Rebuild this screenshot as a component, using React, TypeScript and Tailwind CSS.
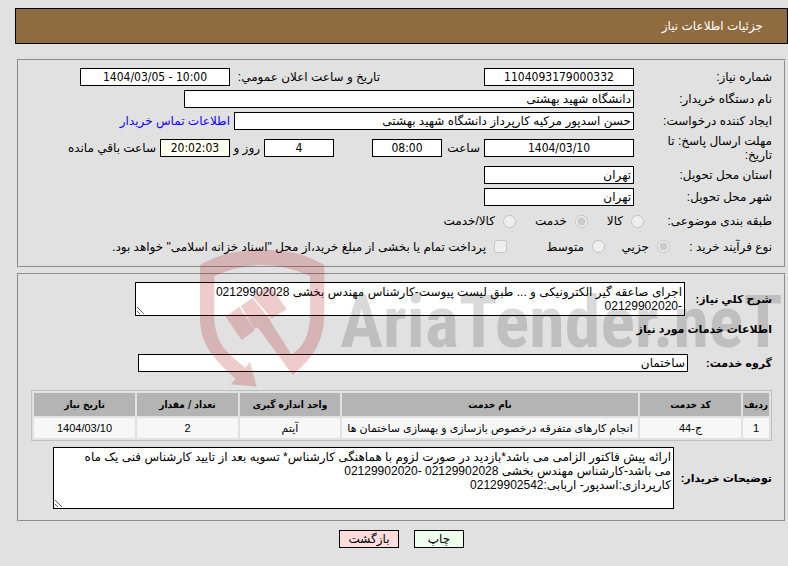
import React from 'react';

const field = 'h-[18px] border border-black bg-white px-0.5 leading-4 text-black';
const numeric = "text-center font-['DejaVu_Sans_Condensed','DejaVu_Sans',sans-serif]";

const Label = ({ htmlFor, className = 'w-[138px]', children }: { htmlFor: string; className?: string; children: React.ReactNode }) => (
    <label htmlFor={htmlFor} className={`shrink-0 ${className}`}>
        {children}
    </label>
);

const Watermark = () => (
    <div className="pointer-events-none absolute inset-x-0 top-[248px]" dir="ltr">
        <svg className="absolute left-[198px] top-0 h-[142px] w-[130px]" viewBox="24 24 390 426" fill="#aa0008" fillOpacity="0.2">
            <path d="M30 75Q75 50 115 40Q165 29 215 29Q270 29 320 40Q358 50 403 75V230Q400 285 379 324Q360 361 308 405L203 262Q198 268 190 262L153 198L187 174L240 238L245 250L305 345Q335 322 347 295Q360 265 360 225V108Q285 75 215 75Q150 75 73 108V240Q76 285 97 318Q108 336 165 383L180 365L200 440L122 433L137 416Q85 370 62 338Q34 300 30 245Z" />
            <path d="M107 230L148 200L195 270L155 300Z" />
            <path d="M187 169L196 163L240 138L290 208L245 235L229 217Z" />
        </svg>
        <span className="absolute left-[340px] top-[25px] whitespace-nowrap font-['Roboto_Condensed',Roboto,sans-serif] text-[72px] leading-[100px] font-bold text-black/15">
            AriaTender.neT
        </span>
    </div>
);

const columns = [
    { name: 'ردیف', width: 'w-[26px]', value: '1' },
    { name: 'کد خدمت', width: 'w-[101px]', value: 'ج-44' },
    { name: 'نام خدمت', width: '', value: 'انجام کارهای متفرقه درخصوص بازسازی و بهسازی ساختمان ها' },
    { name: 'واحد اندازه گیری', width: 'w-[100px]', value: 'آیتم' },
    { name: 'تعداد / مقدار', width: 'w-[101px]', value: '2' },
    { name: 'تاریخ نیاز', width: 'w-[101px]', value: '1404/03/10' },
];

const description = 'اجرای صاعقه گیر الکترونیکی و ... طبق لیست پیوست-کارشناس مهندس بخشی 02129902028\n-02129902020';
const notes =
    'ارائه پیش فاکتور الزامی می باشد*بازدید در صورت لزوم با هماهنگی کارشناس* تسویه بعد از تایید کارشناس فنی یک ماه\nمی باشد-کارشناس مهندس بخشی 02129902028 -02129902020\nکارپردازی:اسدپور- اربابی:02129902542';

export default function App() {
    return (
        <div dir="rtl" className="relative min-h-screen overflow-hidden bg-[#e1e1e1] pt-2 pl-[15px] font-['Liberation_Sans','DejaVu_Sans',sans-serif] text-xs leading-[14px] text-black">
            <header className="flex h-9 items-center border border-black bg-[#8f6c3f] px-6 text-white">
                <h1>جزئیات اطلاعات نیاز</h1>
            </header>

            <fieldset className="mt-[15px] mr-0.5 ml-0.5 border-2 border-[#e1e1e1] [border-style:groove] px-3 pt-[5px] pb-[7px]">
                <div className="flex h-[22px] items-center">
                    <Label htmlFor="number">شماره نیاز:</Label>
                    <input id="number" readOnly defaultValue="1104093179000332" className={`${field} ${numeric} w-[150px]`} />
                    <Label htmlFor="announce" className="mr-[104px] w-[150px]">تاریخ و ساعت اعلان عمومي:</Label>
                    <input id="announce" dir="ltr" readOnly defaultValue="1404/03/05 - 10:00" className={`${field} ${numeric} w-[150px]`} />
                </div>
                <div className="flex h-[22px] items-center">
                    <Label htmlFor="buyer">نام دستگاه خریدار:</Label>
                    <input id="buyer" readOnly defaultValue="دانشگاه شهید بهشتی" className={`${field} w-[450px]`} />
                </div>
                <div className="flex h-[22px] items-center">
                    <Label htmlFor="creator">ایجاد کننده درخواست:</Label>
                    <input id="creator" readOnly defaultValue="حسن اسدپور مرکیه کارپرداز دانشگاه شهید بهشتی" className={`${field} w-[400px]`} />
                    <a href="#contact" className="mr-1 text-[#1400ff]">اطلاعات تماس خریدار</a>
                </div>
                <div className="flex h-8 items-center">
                    <Label htmlFor="deadline" className="w-[138px] pl-6">مهلت ارسال پاسخ: تا تاریخ:</Label>
                    <input id="deadline" readOnly defaultValue="1404/03/10" className={`${field} ${numeric} w-[150px]`} />
                    <Label htmlFor="hour" className="w-[42px] px-1">ساعت</Label>
                    <input id="hour" readOnly defaultValue="08:00" className={`${field} ${numeric} w-[70px]`} />
                    <input id="days" readOnly defaultValue="4" className={`${field} ${numeric} mr-[38px] w-[70px]`} />
                    <Label htmlFor="days" className="w-[34px] pr-1 whitespace-nowrap">روز و</Label>
                    <input id="remaining" readOnly defaultValue="20:02:03" className={`h-[18px] w-[70px] border border-black bg-[#fffff0] leading-4 ${numeric}`} />
                    <Label htmlFor="remaining" className="pr-1">ساعت باقي مانده</Label>
                </div>
                <div className="flex h-[22px] items-center">
                    <Label htmlFor="province">استان محل تحویل:</Label>
                    <input id="province" readOnly defaultValue="تهران" className={`${field} w-[150px]`} />
                </div>
                <div className="flex h-[22px] items-center">
                    <Label htmlFor="city">شهر محل تحویل:</Label>
                    <input id="city" readOnly defaultValue="تهران" className={`${field} w-[150px]`} />
                </div>
                <div className="flex h-[26px] items-center">
                    <span className="w-32">طبقه بندی موضوعی:</span>
                    <input id="goods" type="radio" name="category" disabled />
                    <Label htmlFor="goods" className="w-[43px] pr-2">کالا</Label>
                    <input id="service" type="radio" name="category" disabled defaultChecked />
                    <Label htmlFor="service" className="w-[59px] pr-2">خدمت</Label>
                    <input id="both" type="radio" name="category" disabled />
                    <Label htmlFor="both" className="pr-2">کالا/خدمت</Label>
                </div>
                <div className="flex h-[25px] items-center">
                    <span className="w-[102px]">نوع فرآیند خرید :</span>
                    <input id="minor" type="radio" name="process" disabled defaultChecked />
                    <Label htmlFor="minor" className="w-[52px] pr-2">جزیي</Label>
                    <input id="medium" type="radio" name="process" disabled />
                    <Label htmlFor="medium" className="w-[85px] pr-2">متوسط</Label>
                    <input id="treasury" type="checkbox" disabled />
                    <Label htmlFor="treasury" className="pr-2">پرداخت تمام یا بخشی از مبلغ خرید،از محل "اسناد خزانه اسلامی" خواهد بود.</Label>
                </div>
            </fieldset>

            <fieldset className="mt-[5px] mr-0.5 ml-0.5 border-2 border-[#e1e1e1] [border-style:groove] px-3 pt-[7px] pb-[11px]">
                <div className="flex items-center">
                    <Label htmlFor="description" className="w-[87px] text-[11px] font-bold">شرح کلي نیاز:</Label>
                    <textarea id="description" readOnly defaultValue={description} className="h-[34px] w-[550px] overflow-hidden border border-black bg-white p-0.5" />
                </div>
                <h2 className="mt-1.5 text-[11px] font-bold">اطلاعات خدمات مورد نیاز</h2>
                <div className="mt-[18px] flex items-center">
                    <Label htmlFor="group" className="w-[84px] text-[11px] font-bold">گروه خدمت:</Label>
                    <input id="group" readOnly defaultValue="ساختمان" className={`${field} w-[550px]`} />
                </div>
                <table className="mt-[18px] w-full table-fixed border-separate border-spacing-0.5 border border-[#c0c0c0] text-center">
                    <thead className="font-['DejaVu_Sans_Condensed','DejaVu_Sans',sans-serif] text-[10px]">
                        <tr className="h-[23px] bg-[#b4b4b4]">
                            {columns.map((col) => (
                                <th key={col.name} className={`${col.width} p-0`}>{col.name}</th>
                            ))}
                        </tr>
                    </thead>
                    <tbody className="text-[11px]">
                        <tr className="h-5 bg-[#f7f7f7]">
                            {columns.map((col) => (
                                <td key={col.name} className="p-0 whitespace-nowrap">{col.value}</td>
                            ))}
                        </tr>
                    </tbody>
                </table>
                <div className="mt-1.5 flex items-center">
                    <Label htmlFor="notes" className="w-[98px] text-[11px] font-bold">توضیحات خریدار:</Label>
                    <textarea id="notes" readOnly defaultValue={notes} className="h-[62px] w-[621px] overflow-hidden border border-black bg-white p-0.5" />
                </div>
            </fieldset>

            <div className="mt-2 flex justify-center gap-[15px]">
                <button className="h-[18px] w-[50px] border border-black bg-[#eeffee]">چاپ</button>
                <button className="h-[18px] w-[60px] border border-black bg-[#ffdddd]">بازگشت</button>
            </div>

            <Watermark />
        </div>
    );
}
